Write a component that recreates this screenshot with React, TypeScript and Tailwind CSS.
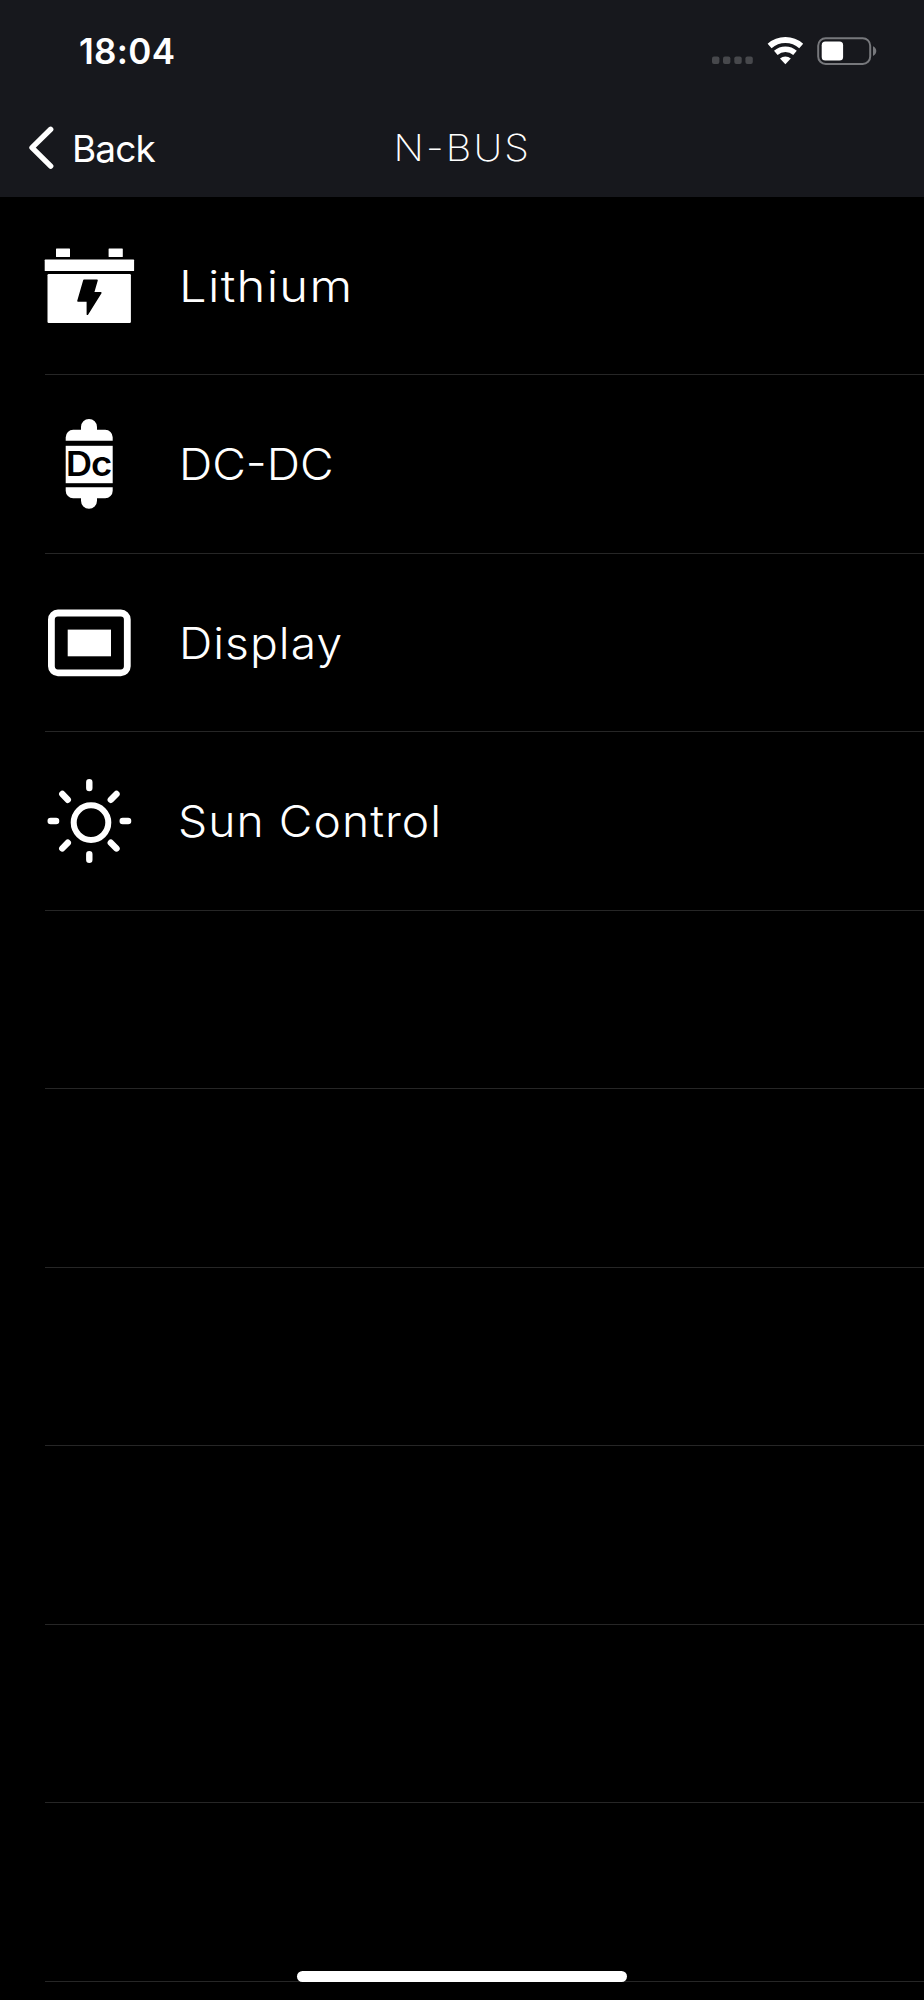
import type { ReactNode } from "react";

type Device = {
    name: string;
    labelClass: string;
    icon: ReactNode;
};

const BatteryIcon = () => (
    <svg viewBox="0 0 92 92" className="h-[92px] w-[92px] shrink-0" fill="white">
        <rect x="12" y="8.5" width="14" height="8.6" rx="0.6" />
        <rect x="64.6" y="8.5" width="14.2" height="8.6" rx="0.6" />
        <rect x="0.7" y="19.6" width="89.4" height="11.4" rx="0.6" />
        <rect x="3.5" y="34" width="83.4" height="48.9" rx="1.2" />
        <path
            d="M40 40.3h13l-3.6 12.6h7.4L43.4 74.2v-13.3H34z"
            fill="black"
            stroke="black"
            strokeWidth="1.6"
            strokeLinejoin="round"
        />
    </svg>
);

const DcIcon = () => (
    <svg viewBox="0 0 92 92" className="h-[92px] w-[92px] shrink-0" fill="white">
        <path d="M21.7 22.8v-3.5a7.5 7.5 0 0 1 7.5-7.5H37V9a8 8 0 0 1 16 0v2.8h8.2a7.5 7.5 0 0 1 7.5 7.5v3.5z" />
        <rect x="21.7" y="27.8" width="47" height="37.4" />
        <path d="M21.7 69.2v3.5a7.5 7.5 0 0 0 7.5 7.5H37v2.6a8 8 0 0 0 16 0v-2.6h8.2a7.5 7.5 0 0 0 7.5-7.5v-3.5z" />
        <text
            x="21.8"
            y="57.8"
            fill="black"
            fontSize="33.5"
            fontWeight="600"
            letterSpacing="-1"
            textLength="45.5"
            lengthAdjust="spacingAndGlyphs"
            fontFamily="Inter, sans-serif"
        >
            Dc
        </text>
    </svg>
);

const DisplayIcon = () => (
    <svg viewBox="0 0 92 92" className="h-[92px] w-[92px] shrink-0" fill="none">
        <rect x="7.4" y="16" width="75.9" height="59.8" rx="6.5" stroke="white" strokeWidth="6.8" />
        <rect x="23.7" y="32.6" width="43.3" height="26.7" fill="white" />
    </svg>
);

const SunIcon = () => (
    <svg
        viewBox="0 0 92 92"
        className="h-[92px] w-[92px] shrink-0"
        fill="none"
        stroke="white"
        strokeWidth="6.4"
        strokeLinecap="round"
    >
        <circle cx="47" cy="47.6" r="17.3" strokeWidth="6" />
        <path d="M45.3 7.3v5.8M45.3 79.3v5.5M6.7 46h5.4M78.7 46h5.4" />
        <path d="M18.3 19l5.5 5.8M72.5 19l-5.7 5.8M23.8 67.7l-5.5 5.7M66.8 67.7l5.7 5.7" />
    </svg>
);

const devices: Device[] = [
    { name: "Lithium", labelClass: "ml-[43px] scale-x-[1.11] tracking-[1.2px]", icon: <BatteryIcon /> },
    { name: "DC-DC", labelClass: "ml-[43px] scale-x-[1.05]", icon: <DcIcon /> },
    { name: "Display", labelClass: "ml-[43px] scale-x-[1.05] tracking-[1px]", icon: <DisplayIcon /> },
    { name: "Sun Control", labelClass: "ml-[42px] scale-x-[1.05] tracking-[1px]", icon: <SunIcon /> },
];

const EMPTY_ROWS = 6;

const StatusBar = () => (
    <div className="flex h-[101px] items-center justify-between pl-[79px] pr-[47px] text-white">
        <span className="pt-px text-[35px] font-semibold leading-none tracking-[0.3px]">18:04</span>
        <svg width="166" height="30" viewBox="0 0 166 30">
            {/* no signal */}
            <g fill="#47484c">
                <rect x="1" y="20.5" width="7.4" height="7.4" rx="2" />
                <rect x="12" y="20.5" width="7.4" height="7.4" rx="2" />
                <rect x="23.3" y="20.5" width="7.4" height="7.4" rx="2" />
                <rect x="34.4" y="20.5" width="7.4" height="7.4" rx="2" />
            </g>
            <g fill="none" stroke="white">
                <path d="M58.6 10a24 24 0 0 1 31.6 0" strokeWidth="6" />
                <path d="M64.8 16.9a14.7 14.7 0 0 1 19.2 0" strokeWidth="5.5" />
            </g>
            <path d="M74.4 28.3l-5.4-5.7a7.8 7.8 0 0 1 10.8 0z" fill="white" />
            <rect x="107.2" y="2.2" width="52" height="25.8" rx="7.5" fill="none" stroke="#77787c" strokeWidth="2" />
            <rect x="110.7" y="5.6" width="21.4" height="19" rx="3.6" fill="white" />
            <path d="M162 10.3c2 .8 3.3 2.6 3.3 4.8s-1.3 4-3.3 4.8z" fill="#77787c" />
        </svg>
    </div>
);

const NavBar = () => (
    <div className="grid h-24 grid-cols-[1fr_auto_1fr] items-center pb-[3px] text-white">
        <button className="flex items-center gap-[17px] pl-7">
            <svg width="27" height="44" viewBox="0 0 27 44" fill="none" stroke="white" strokeWidth="5.4" strokeLinecap="round" strokeLinejoin="round">
                <path d="M22.7 3.3L4 21.6l18.7 18.5" />
            </svg>
            <span className="pt-px text-[37px] leading-none tracking-[-0.9px]">Back</span>
        </button>
        <h1 className="scale-x-[1.07] text-[37px] font-extralight leading-none tracking-[2px]">N-BUS</h1>
    </div>
);

export default function App() {
    return (
        <div className="relative h-[2000px] w-[924px] overflow-hidden bg-black font-['Inter',sans-serif]">
            <header className="h-[196.5px] bg-[#17181d]">
                <StatusBar />
                <NavBar />
            </header>
            <ul className="pl-[45px]">
                {devices.map((device) => (
                    <li key={device.name} className="flex h-[178.55px] items-center border-b border-[#262626] pt-[0.8px] text-white">
                        <div className="-ml-px">{device.icon}</div>
                        <span className={`origin-left text-[44px] font-light leading-none ${device.labelClass}`}>
                            {device.name}
                        </span>
                    </li>
                ))}
                {Array.from({ length: EMPTY_ROWS }, (_, i) => (
                    <li key={i} className="h-[178.55px] border-b border-[#262626]" />
                ))}
            </ul>
            {/* home indicator */}
            <div className="absolute left-[297px] top-[1971px] h-[11px] w-[330px] rounded-full bg-white" />
        </div>
    );
}
